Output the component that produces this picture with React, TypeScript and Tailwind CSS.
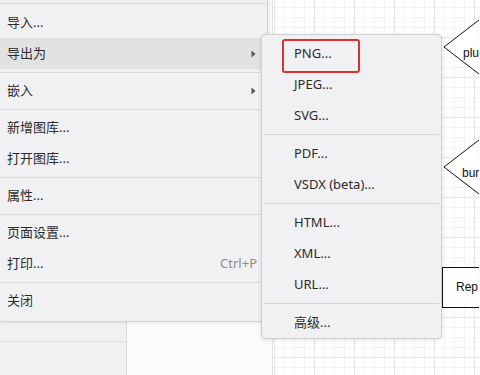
import { Fragment } from 'react';

type Item = { label: string; shortcut?: string; submenu?: boolean; active?: boolean } | 'sep';

const mainItems: Item[] = [
  { label: '导入...' },
  { label: '导出为', submenu: true, active: true },
  'sep',
  { label: '嵌入', submenu: true },
  'sep',
  { label: '新增图库...' },
  { label: '打开图库...' },
  'sep',
  { label: '属性...' },
  'sep',
  { label: '页面设置...' },
  { label: '打印...', shortcut: 'Ctrl+P' },
  'sep',
  { label: '关闭' },
];

const exportItems: (string | 'sep')[] = [
  'PNG...',
  'JPEG...',
  'SVG...',
  'sep',
  'PDF...',
  'VSDX (beta)...',
  'sep',
  'HTML...',
  'XML...',
  'URL...',
  'sep',
  '高级...',
];

function Arrow() {
  return (
    <svg width="5" height="8" viewBox="0 0 5 8" className="shrink-0">
      <path d="M0.5 0.5 L4.5 4 L0.5 7.5 Z" fill="#555" />
    </svg>
  );
}

function Diagram() {
  return (
    <svg width="206" height="375" className="absolute inset-0" style={{ fontFamily: '"Liberation Sans", Arial, sans-serif' }}>
      <g transform="translate(-274 0)">
        {/* diamonds, cut by the window edge */}
        <polygon points="445,47 480,20 515,47 480,74" fill="#fff" stroke="#111" strokeWidth="1" />
        <text x="464" y="57" fontSize="12" fill="#111">plu</text>
        <polygon points="445,167 480,140 515,167 480,194" fill="#fff" stroke="#111" strokeWidth="1" />
        <text x="463" y="177" fontSize="12" fill="#111">bur</text>
        {/* rectangle */}
        <rect x="443.5" y="267.5" width="100" height="40" fill="#fff" stroke="#111" strokeWidth="1" />
        <text x="457" y="291" fontSize="12" fill="#111">Rep</text>
      </g>
    </svg>
  );
}

export default function App() {
  return (
    <div
      className="relative w-[480px] h-[375px] overflow-hidden bg-white text-[13px] text-[#2b2b2b]"
      style={{ fontFamily: '"Noto Sans", "Noto Sans CJK SC", sans-serif' }}
    >
      {/* page behind the menu */}
      <div className="flex h-full">
        <div className="w-[127px] shrink-0 bg-[#f1f1f1] border-r border-[#dcdcdc] flex flex-col">
          <div className="h-[342px] border-b border-[#e0e0e0]" />
        </div>
        <div className="w-[146px] shrink-0 bg-[#fbfbfb] border-r border-[#e2e2e2]" />
        <div className="relative flex-1 bg-white bg-[linear-gradient(to_right,#e6e6e6_1px,transparent_1px),linear-gradient(to_bottom,#e6e6e6_1px,transparent_1px),linear-gradient(to_right,#f3f3f3_1px,transparent_1px),linear-gradient(to_bottom,#f3f3f3_1px,transparent_1px)] bg-[size:40px_40px,40px_40px,10px_10px,10px_10px] bg-[position:1px_37px,1px_37px,1px_7px,1px_7px]">
          <Diagram />
        </div>
      </div>

      {/* File menu */}
      <div className="absolute left-0 top-0 w-[268px] bg-[#f1f1f3] border-r border-b border-[#d2d2d2] pt-[3px] pb-[5px] shadow-[1px_1px_3px_rgba(0,0,0,0.08)]">
        <div className="h-px bg-[#dadada] mb-[3px]" />
        {mainItems.map((item, i) =>
          item === 'sep' ? (
            <div key={i} className="h-px bg-[#dadada] mt-[3px] mb-[2px]" />
          ) : (
            <div
              key={i}
              className={`flex items-center h-[31px] pl-[7px] pr-[11px] ${item.active ? 'bg-[#e2e2e2]' : ''}`}
            >
              <span className="flex-1">{item.label}</span>
              {item.shortcut && <span className="text-[#8c8c8c] -mr-[1px]">{item.shortcut}</span>}
              {item.submenu && <Arrow />}
            </div>
          )
        )}
      </div>

      {/* Export submenu */}
      <div className="absolute left-[261px] top-[34px] w-[181px] h-[305px] bg-[#f1f1f3] border border-[#d0d0d0] rounded-[4px] pt-[3px] shadow-[0_1px_4px_rgba(0,0,0,0.12)]">
        {exportItems.map((item, i) =>
          item === 'sep' ? (
            <div key={i} className="h-px bg-[#d6d6d6] mx-[2px] mt-[3px] mb-[3px]" />
          ) : (
            <Fragment key={i}>
              <div className="flex items-center h-[31px] pl-[32px]">{item}</div>
            </Fragment>
          )
        )}
        <div className="absolute left-[20px] top-[4px] w-[78px] h-[34px] border-[2.5px] border-[#d8312f] rounded-[3px]" />
      </div>
    </div>
  );
}
